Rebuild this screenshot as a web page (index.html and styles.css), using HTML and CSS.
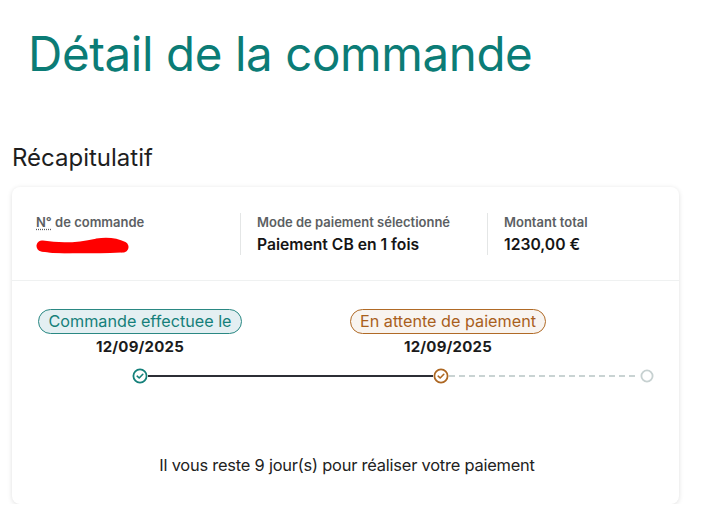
FILE: index.html
```html
<!DOCTYPE html>
<html lang="fr">
<head>
<meta charset="utf-8">
<title>Détail de la commande</title>
<link rel="stylesheet" href="styles.css">
</head>
<body>
<main class="page">
  <h1 class="title">Détail de la commande</h1>
  <h2 class="section-title">Récapitulatif</h2>
  <section class="card">
    <div class="summary">
      <div class="info">
        <div class="label"><abbr title="Numéro" class="abbr">N°</abbr> de commande</div>
        <div class="value">
          <svg class="redact" width="96" height="20" viewBox="0 0 96 20"><path d="M7 11 C 25 14, 45 13, 62 9 C 75 7, 82 9, 88 12" fill="none" stroke="#ff0000" stroke-width="11" stroke-linecap="round"/><path d="M8 13 C 30 16, 60 15, 86 14" fill="none" stroke="#ff0000" stroke-width="7" stroke-linecap="round"/></svg>
        </div>
      </div>
      <div class="info">
        <div class="label">Mode de paiement sélectionné</div>
        <div class="value">Paiement CB en 1 fois</div>
      </div>
      <div class="info">
        <div class="label">Montant total</div>
        <div class="value">1230,00 €</div>
      </div>
    </div>
    <div class="progress">
      <div class="steps">
        <div class="step step-1">
          <span class="badge badge-done">Commande effectuee le</span>
          <span class="date">12/09/2025</span>
        </div>
        <div class="step step-2">
          <span class="badge badge-wait">En attente de paiement</span>
          <span class="date">12/09/2025</span>
        </div>
      </div>
      <div class="track">
        <svg class="dot" width="16" height="16" viewBox="0 0 16 16"><circle cx="8" cy="8" r="6.6" fill="#fff" stroke="#14807a" stroke-width="1.8"/><path d="M5.2 8.2 L7.2 10 L10.8 6.3" fill="none" stroke="#14807a" stroke-width="1.6" stroke-linecap="round" stroke-linejoin="round"/></svg>
        <span class="line line-solid"></span>
        <svg class="dot" width="16" height="16" viewBox="0 0 16 16"><circle cx="8" cy="8" r="6.6" fill="#fff" stroke="#ad6722" stroke-width="1.8"/><path d="M5.2 8.2 L7.2 10 L10.8 6.3" fill="none" stroke="#ad6722" stroke-width="1.6" stroke-linecap="round" stroke-linejoin="round"/></svg>
        <span class="line line-dashed"></span>
        <svg class="dot" width="16" height="16" viewBox="0 0 16 16"><circle cx="8" cy="8" r="5.6" fill="#fff" stroke="#c7d1d1" stroke-width="1.8"/></svg>
      </div>
      <p class="notice">Il vous reste 9 jour(s) pour réaliser votre paiement</p>
    </div>
  </section>
</main>
</body>
</html>
```

FILE: styles.css
```css
* { box-sizing: border-box; }
html, body { margin: 0; padding: 0; background: #fff; }
body {
  font-family: Inter, "Noto Sans", "Liberation Sans", sans-serif;
  color: #1d1d1f;
}
.page {
  padding: 22px 48px 0 12px;
}
.title {
  margin: 0 0 0 16px;
  font-size: 47.5px;
  font-weight: 400;
  line-height: 64px;
  color: #0b7c76;
  letter-spacing: -0.4px;
}
.section-title {
  margin: 57px 0 0 0;
  font-size: 24px;
  font-weight: 400;
  line-height: 30px;
  color: #1e1e1e;
}
.card {
  margin-top: 14px;
  width: 667px;
  background: #fff;
  border-radius: 8px;
  box-shadow: 0 1px 5px rgba(0,0,0,0.13);
}
.summary {
  display: flex;
  padding: 26px 0 25px 24px;
  border-bottom: 1.5px solid #eff1f1;
}
.info {
  display: flex;
  flex-direction: column;
  gap: 4px;
}
.info:nth-child(1) { width: 204px; }
.info:nth-child(2) { width: 247px; border-left: 1px solid #e4e6e6; padding-left: 16px; }
.info:nth-child(3) { border-left: 1px solid #e4e6e6; padding-left: 16px; }
.label {
  font-size: 13px;
  font-weight: 600;
  line-height: 18px;
  color: #5c5f63;
}
.abbr {
  text-decoration: underline dotted;
  text-underline-offset: 2px;
}
.value {
  font-size: 15.7px;
  font-weight: 600;
  line-height: 20px;
  color: #151515;
  height: 20px;
}
.redact { display: block; margin-left: -1px; }
.progress {
  padding: 28px 24px 29px 27px;
}
.steps {
  display: flex;
}
.step {
  display: flex;
  flex-direction: column;
  align-items: center;
  gap: 3px;
}
.step-1 { width: 202px; }
.step-2 { width: 196px; margin-left: 109px; }
.badge {
  display: inline-block;
  height: 25px;
  border-radius: 13px;
  padding: 0 9px;
  font-size: 16.2px;
  line-height: 23px;
  white-space: nowrap;
}
.badge-done {
  border: 1px solid #2a8883;
  background: #e4eff2;
  color: #157f7a;
}
.badge-wait {
  border: 1px solid #b06a26;
  background: #f8f4f0;
  color: #a95f1c;
}
.date {
  font-size: 15px;
  font-weight: 700;
  line-height: 20px;
  color: #1b1b1b;
  letter-spacing: 0.2px;
}
.track {
  display: flex;
  align-items: center;
  margin-top: 11px;
  padding-left: 93px;
}
.dot { flex: none; display: block; }
.line { display: block; height: 2px; }
.line-solid { width: 286px; background: #2c2e35; }
.line-dashed {
  width: 191px;
  background: repeating-linear-gradient(90deg, #c9d3d3 0 6px, transparent 6px 10px);
}
.notice {
  margin: 71px 0 0 0;
  text-align: center;
  font-size: 16.4px;
  line-height: 20px;
  color: #222;
  letter-spacing: -0.2px;
}
```
